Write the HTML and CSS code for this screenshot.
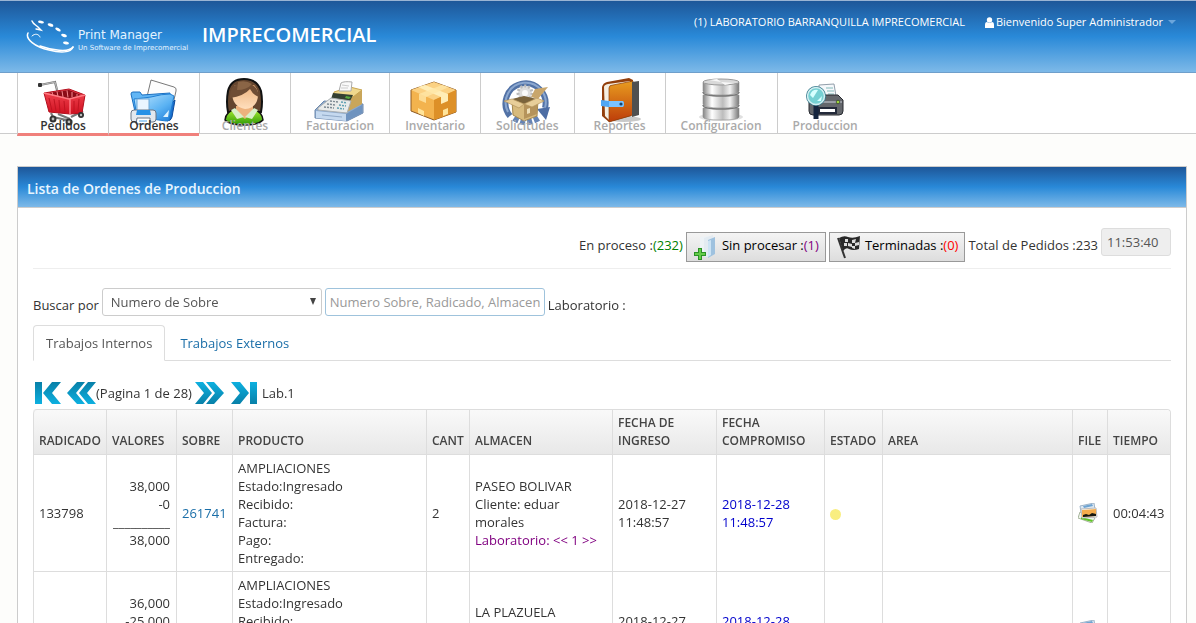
FILE: index.html
```html
<!DOCTYPE html>
<html lang="es">
<head>
<meta charset="utf-8">
<title>Print Manager</title>
<link rel="stylesheet" href="styles.css">
</head>
<body>
<header class="topbar">
  <a class="logo" href="#">
    <svg class="logo-mark" viewBox="0 0 50 36" aria-hidden="true">
      <g fill="none" stroke="#fff" stroke-linecap="round">
        <path d="M6 3c1 3 4 4 6 6l3 3-5-1" stroke-width="1.4"/>
        <path d="M6 18c3-3 7-2 8 1" stroke-width="1"/>
        <path d="M2 15c-3 6 7 14 21 17 11 3 22 3 24-3" stroke-width="1.5"/>
        <path d="M14 28c11 4 29 7 33 1" stroke-width="1.5"/>
      </g>
      <g fill="#fff">
        <ellipse cx="15" cy="4" rx="3" ry="1.4" transform="rotate(12 15 4)"/>
        <ellipse cx="24.500" cy="7" rx="3" ry="1.500" transform="rotate(18 24.500 7)"/>
        <ellipse cx="32" cy="11.500" rx="3" ry="1.500" transform="rotate(28 32 11.500)"/>
        <ellipse cx="38" cy="17.500" rx="3" ry="1.500" transform="rotate(20 38 17.500)"/>
        <ellipse cx="40" cy="25" rx="3" ry="1.400" transform="rotate(8 40 25)"/>
      </g>
    </svg>
    <span class="logo-text">
      <span class="logo-name">Print Manager</span>
      <span class="logo-tag">Un Software de Imprecomercial</span>
    </span>
  </a>
  <h1 class="company">IMPRECOMERCIAL</h1>
  <div class="account">
    <span>(1) LABORATORIO BARRANQUILLA IMPRECOMERCIAL</span>
    <button class="user-menu" type="button">
      <svg class="user-icon" viewBox="0 0 9 11" aria-hidden="true"><circle cx="4.500" cy="3" r="2.700" fill="#fff"/><path d="M0 11V8q0-3 2-3 2.500 2 5 0 2 0 2 3v3z" fill="#fff"/></svg>
      <span>Bienvenido Super Administrador</span>
      <span class="caret"></span>
    </button>
  </div>
</header>

<nav class="mainnav">
  <a class="nav-item active" href="#">
    <svg class="nav-icon" viewBox="0 0 48 48" aria-hidden="true">
      <defs><linearGradient id="red" x1="0" y1="0" x2="0" y2="1"><stop offset="0" stop-color="#f54a55"/><stop offset="1" stop-color="#cf1020"/></linearGradient></defs>
      <path d="M1 8l15-3 3 12M12 36l2 4 18 4M42 34l-1 3M19 37l12 5M44 34L32 40" fill="none" stroke="#777" stroke-width="2.200"/>
      <path d="M1 8l15-3 3 11" fill="none" stroke="#ccc" stroke-width=".8"/>
      <rect x="-1" y="6" width="4" height="4" rx="1" fill="#333"/>
      <path d="M5 16L30 12l16 6-3 18-12 1-21-2z" fill="url(#red)" stroke="#b20e1c"/>
      <path d="M9 16l21-3 12 5-12 4z" fill="#8b0c17"/>
      <path d="M13 15l1 4M18 14.500l1 5M23 14l1 6M28 13.500l1 7M33 15v5M38 17v2" stroke="#f58a90" stroke-width="1"/>
      <path d="M5 16l25 6 16-4M31 22v15" fill="none" stroke="#ff7a82" stroke-width="1.500"/>
      <path d="M10 21l3 13M15 22l2 12M20 23l1 12M25 24l1 11M35 24v11M40 22l-1 12" stroke="#c01421" stroke-width="1"/>
      <g fill="#333"><circle cx="14" cy="42" r="3.500"/><circle cx="30" cy="45" r="3.500"/><circle cx="42" cy="38" r="3"/></g>
      <g fill="#bbb"><circle cx="14" cy="42" r="1.400"/><circle cx="30" cy="45" r="1.400"/><circle cx="42" cy="38" r="1.200"/></g>
    </svg>
    <span class="nav-label">Pedidos</span>
  </a>
  <a class="nav-item active" href="#">
    <svg class="nav-icon" viewBox="0 0 48 48" aria-hidden="true">
      <defs><linearGradient id="blue" x1="0" y1="0" x2="1" y2="1"><stop offset="0" stop-color="#c4e9ff"/><stop offset=".6" stop-color="#5ab2f3"/><stop offset="1" stop-color="#1b78d6"/></linearGradient></defs>
      <path d="M21 3l23 7q3 1 2 4l-5 22-26-8z" fill="#fdfdfd" stroke="#555" stroke-width=".8"/>
      <path d="M38 30l7-7-3 17q-1 4-5 4z" fill="#1a6fce" stroke="#0c4c9d"/>
      <path d="M1 17q0-2 2-2l7 0 2 3 28-2-1 26-33-3z" fill="#62b6f5" stroke="#1b6fc0"/>
      <path d="M4 22q10-1 17-2 11-3 19-3l4 2-5 24q-1 1-3 1L7 40z" fill="url(#blue)" stroke="#1f7ed3"/>
      <path d="M33 40l6-7-1 7z" fill="#dff3ff"/>
      <rect x="7" y="22" width="12" height="15" fill="#eaf5ff" stroke="#6ea8d8"/>
      <rect x="1" y="33" width="25" height="12" rx="3" fill="#e3e8ee" stroke="#6b7686"/>
      <path d="M7 33h13l1 5H6z" fill="#2791e6"/>
      <path d="M7 41h13v6H6z" fill="#fff" stroke="#6b7686"/>
      <path d="M9 44h8" stroke="#48a2e8"/>
    </svg>
    <span class="nav-label">Ordenes</span>
  </a>
  <a class="nav-item" href="#">
    <svg class="nav-icon" viewBox="0 0 48 48" aria-hidden="true">
      <defs><linearGradient id="green" x1="0" y1="0" x2="0" y2="1"><stop offset="0" stop-color="#a8ed34"/><stop offset="1" stop-color="#2f9a07"/></linearGradient><linearGradient id="skin" x1="0" y1="0" x2="0" y2="1"><stop offset="0" stop-color="#edb27d"/><stop offset="1" stop-color="#ffdfbd"/></linearGradient></defs>
      <path d="M7 35Q5 25 7 14 10 2 23 2t17 12q2 11 0 21z" fill="#65462f" stroke="#111" stroke-width="2"/>
      <path d="M4 43q1-9 11-11h16q10 2 11 11-5 5-19 5T4 43z" fill="url(#green)" stroke="#111" stroke-width="1.500"/>
      <path d="M15 29h17v5l-8 8-9-7z" fill="#edb27d"/>
      <path d="M14 31l9 9-7 2-6-9zM33 31l-9 9 7 2 6-9z" fill="#d9efc8"/>
      <path d="M11 17q0-5 3-9h19q4 4 4 9 0 14-13 15-12-2-13-15z" fill="url(#skin)"/>
      <path d="M9 21Q8 7 22 6q15 0 16 14-6-2-9-8-6 7-20 9z" fill="#6f4d34"/>
      <path d="M17 5q8-2 14 2-5 6-15 6z" fill="#8a6546"/>
    </svg>
    <span class="nav-label">Clientes</span>
  </a>
  <a class="nav-item" href="#">
    <svg class="nav-icon" viewBox="0 0 48 48" aria-hidden="true">
      <path d="M-1 33l9-9 39 3v9l-16 8L-1 41z" fill="#8caace" stroke="#6c88ad"/>
      <path d="M0 34l30 3v7L0 41z" fill="#c5d9ef"/>
      <path d="M6 38l20 2" stroke="#91aac8"/>
      <path d="M30 37l16-9v8l-16 8z" fill="#6f93bf"/>
      <path d="M34 20l12-7 0 14-15 8z" fill="#c9a65a"/>
      <path d="M18 15l16-5 12 3-9 7-19-3z" fill="#efd88e" stroke="#c8a550"/>
      <path d="M17 16l20 2-3 6-19-2z" fill="#343f32"/>
      <path d="M30 19l5 1-2 2-4-1z" fill="#55a83f"/>
      <path d="M2 31l13-10 20 3-4 12-29-3z" fill="#e9ebea" stroke="#abb0b3"/>
      <path d="M14 24l8 1M11 27l9 1M8 30l10 1" stroke="#7d8993" stroke-width="1.500" stroke-dasharray="2 1"/>
      <path d="M25 25l6 1M23 28l7 1M21 31l7 1" stroke="#61a1b3" stroke-width="1.500" stroke-dasharray="2 1"/>
      <path d="M23 14l2-8q3-2 11-1l-1 9z" fill="#fafafa" stroke="#aaa"/>
      <path d="M26 8l7 1M25 11l7 0" stroke="#ccc"/>
    </svg>
    <span class="nav-label">Facturacion</span>
  </a>
  <a class="nav-item" href="#">
    <svg class="nav-icon" viewBox="0 0 48 48" aria-hidden="true">
      <path d="M0 13L23 5l22 8v22L23 43 0 34z" fill="#f3b34e" stroke="#8e5b24"/>
      <path d="M0 13l23-8 22 8-22 10z" fill="#fbd183"/>
      <path d="M23 23l22-10v22l-22 8z" fill="#dd9028"/>
      <path d="M7 10l23 10v7l7-3v-7L14 8z" fill="#ffedb6"/>
      <path d="M38 10L15 20v6l-7-3v-6L31 8z" fill="#ffe6a6" opacity=".8"/>
      <path d="M7 31l6 3v5l-6-3zM32 33l5-2v6l-5 2z" fill="#ffe49a"/>
    </svg>
    <span class="nav-label">Inventario</span>
  </a>
  <a class="nav-item" href="#">
    <svg class="nav-icon" viewBox="0 0 48 48" aria-hidden="true">
      <path d="M7 39A20 20 0 1 1 42 31" fill="none" stroke="#5272a6" stroke-width="6"/>
      <path d="M5 35A20 20 0 1 1 42 31" fill="none" stroke="#8ba7cf" stroke-width="2"/>
      <path d="M34 32l13-2-4 13z" fill="#4d6da4"/>
      <path d="M11 41q12 8 25 0" fill="none" stroke="#6684b5" stroke-width="6" stroke-dasharray="5 2"/>
      <circle cx="22" cy="16" r="7" fill="#ddd" stroke="#bbb" stroke-width="3" stroke-dasharray="2 2"/>
      <circle cx="22" cy="16" r="3" fill="#fafafa"/>
      <path d="M9 24l12-3 14 2-1 16-13 5-11-6z" fill="#d7ba7d" stroke="#a58850"/>
      <path d="M21 26l13-4v15l-13 5z" fill="#b5935b"/>
      <path d="M9 22l12-3 13 3-13 5z" fill="#7b643c"/>
      <path d="M9 22L21 27l-5 4L1 24z" fill="#e8ce99" stroke="#b3945b" stroke-width=".7"/>
      <path d="M21 27l13-6 7 3-12 6z" fill="#e8ce99" stroke="#b3945b" stroke-width=".7"/>
      <path d="M28 20l4-8 13-2-10 12z" fill="#c8a66c"/>
      <path d="M24 32l3-1v5l-3 1z" fill="#eedfba"/>
    </svg>
    <span class="nav-label">Solicitudes</span>
  </a>
  <a class="nav-item" href="#">
    <svg class="nav-icon" viewBox="0 0 48 48" aria-hidden="true">
      <defs><linearGradient id="book" x1="0" y1="0" x2="0" y2="1"><stop offset="0" stop-color="#e89c20"/><stop offset="1" stop-color="#bd3c09"/></linearGradient></defs>
      <ellipse cx="28" cy="42" rx="17" ry="3" fill="#777" opacity=".4"/>
      <path d="M6 10q1-4 5-5l22-4 4 2-2 36-22 6-7-6z" fill="#923e0b"/>
      <path d="M8 10q0-2 4-3l22-3v34l-20 6-5-5z" fill="#f5eee0"/>
      <path d="M13 11q0-3 4-3l20-4v34l-24 7z" fill="url(#book)" stroke="#8c400c" stroke-width=".7"/>
      <path d="M36 5l7-1v34l-7 2z" fill="#505050"/>
      <path d="M5 23l8 1h14q2 3 0 6H12l-7-1z" fill="#51a7f4"/>
      <path d="M13 24h14q2 3 0 6H13z" fill="#7bc3ff"/>
      <circle cx="25" cy="27" r="1.600" fill="#18436d"/>
    </svg>
    <span class="nav-label">Reportes</span>
  </a>
  <a class="nav-item" href="#">
    <svg class="nav-icon" viewBox="0 0 48 48" aria-hidden="true">
      <defs><linearGradient id="steel"><stop offset="0" stop-color="#858585"/><stop offset=".25" stop-color="#fff"/><stop offset=".55" stop-color="#bcbcbc"/><stop offset=".75" stop-color="#f2f2f2"/><stop offset="1" stop-color="#777"/></linearGradient></defs>
      <ellipse cx="24" cy="40" rx="22" ry="4" fill="#999" opacity=".3"/>
      <g fill="url(#steel)" stroke="#929292" stroke-width=".6">
        <path d="M6 31v9q0 3 18 3t18-3v-9z"/>
        <path d="M6 18v9q0 4 18 4t18-4v-9z"/>
        <path d="M6 5v9q0 4 18 4t18-4V5z"/>
      </g>
      <path d="M6 15q0 4 18 4t18-4M6 28q0 4 18 4t18-4" fill="none" stroke="#777" stroke-width="1.500"/>
      <ellipse cx="24" cy="5" rx="18" ry="3" fill="#d9d9d9" stroke="#999"/>
      <path d="M24 5l-12-2 8-1zM24 5l13 1-9 2z" fill="#f8f8f8"/>
    </svg>
    <span class="nav-label">Configuracion</span>
  </a>
  <a class="nav-item" href="#">
    <svg class="nav-icon" viewBox="0 0 48 48" aria-hidden="true">
      <path d="M18 8l15-1 3 18H18z" fill="#f5f8fb" stroke="#929eaa"/>
      <path d="M25 11h7M26 14h7M27 17h6" stroke="#83baba"/>
      <path d="M8 22l5-4h24l5 5v11q0 4-4 4H12q-4 0-4-4z" fill="#64676c" stroke="#282b31"/>
      <path d="M10 25h31" stroke="#999da4" stroke-width="2"/>
      <path d="M18 31h17v5H18z" fill="#fff" stroke="#242a3a" stroke-width="2"/>
      <circle cx="37" cy="25" r="1.800" fill="#9bd73c" stroke="#222" stroke-width=".6"/>
      <path d="M15 28v14" stroke="#15243e" stroke-width="5"/>
      <circle cx="15" cy="19" r="10" fill="#377b8d"/>
      <circle cx="15" cy="19" r="8.500" fill="#76d0d3" stroke="#d4eff2" stroke-width="1.500"/>
      <path d="M9 18q2-6 8-5l-5 8zM16 24l5-5-1 5z" fill="#d8ffff"/>
    </svg>
    <span class="nav-label">Produccion</span>
  </a>
</nav>

<main class="panel">
  <h2 class="panel-title">Lista de Ordenes de Produccion</h2>
  <div class="panel-body">
    <section class="summary">
      <span>En proceso :<span class="green">(232)</span></span>
      <button class="stat-button" type="button">
        <svg class="stat-icon" viewBox="0 0 24 24" aria-hidden="true">
          <path d="M6 2l9-1v19H6z" fill="#edf2f6"/><path d="M10 3l9-3v18l-6 4h-3z" fill="#e3ebf2"/><path d="M14 5l7-3v17l-7 4z" fill="#9fc2df"/><path d="M14 6l3-1v15l-3 2z" fill="#cce3f4"/>
          <path d="M4 13h4v4h4v4H8v4H4v-4H0v-4h4z" fill="#2b9226"/><path d="M5 14h2v4h4v2H7v4H5v-4H1v-2h4z" fill="#63cb48"/>
        </svg>
        <span class="stat-text">Sin procesar :<span class="purple">(1)</span></span>
      </button>
      <button class="stat-button" type="button">
        <svg class="stat-icon" viewBox="0 0 24 24" aria-hidden="true">
          <path d="M1 3l7 20" stroke="#333" stroke-width="2"/><path d="M2 3q5-3 9-1 5 2 12-1l-1 13q-6 2-10 0-3-2-6 2z" fill="#292929"/>
          <path d="M8 4l3 0v3l-3 0zM15 5l4-1-1 4h-3zM11 8l4 1v3l-4-1zM18 8l4-1v3l-4 1zM7 8h3v3H7zM15 11h3v3l-3-1z" fill="#ddd"/>
        </svg>
        <span class="stat-text">Terminadas :<span class="red">(0)</span></span>
      </button>
      <span>Total de Pedidos :233</span>
      <input class="clock" type="text" value="11:53:40" aria-label="Hora" readonly>
    </section>

    <form class="filters">
      <label for="criterio">Buscar por</label>
      <span class="select-wrap"><select class="field" id="criterio"><option>Numero de Sobre</option></select></span>
      <input class="field search" type="text" placeholder="Numero Sobre, Radicado, Almacen" aria-label="Texto a buscar" autofocus>
      <span>Laboratorio :</span>
    </form>

    <div class="tabs">
      <a class="tab current" href="#">Trabajos Internos</a>
      <a class="tab" href="#">Trabajos Externos</a>
    </div>

    <div class="pager">
      <svg width="0" height="0" class="defs" aria-hidden="true"><defs><linearGradient id="cyan" x1="0" y1="0" x2="0" y2="1"><stop offset="0" stop-color="#0880a8"/><stop offset="1" stop-color="#0db0e0"/></linearGradient><linearGradient id="cyan2" x1="0" y1="0" x2="0" y2="1"><stop offset="0" stop-color="#0db0e0"/><stop offset="1" stop-color="#0880a8"/></linearGradient></defs></svg>
      <button class="page-button" type="button" aria-label="Primera"><svg viewBox="0 0 26 24" aria-hidden="true"><path d="M0 1h7v22H0zM17 1h9l-9 11 9 11h-9L8 12z" fill="url(#cyan)"/></svg></button>
      <button class="page-button wide" type="button" aria-label="Anterior"><svg viewBox="0 0 29 24" aria-hidden="true"><path d="M10 1h8L9 12l9 11h-8L0 12zM21 1h8l-9 11 9 11h-8l-9-11z" fill="url(#cyan)"/></svg></button>
      <span class="page-text">(Pagina 1 de 28)</span>
      <button class="page-button wide" type="button" aria-label="Siguiente"><svg viewBox="0 0 29 24" aria-hidden="true"><path d="M0 1h8l9 11-9 11H0l9-11zM11 1h8l10 11-10 11h-8l9-11z" fill="url(#cyan2)"/></svg></button>
      <button class="page-button last" type="button" aria-label="Ultima"><svg viewBox="0 0 26 24" aria-hidden="true"><path d="M0 1h9l9 11-9 11H0l9-11zM19 1h7v22h-7z" fill="url(#cyan2)"/></svg></button>
      <span>Lab.1</span>
    </div>

    <table class="orders">
      <colgroup><col class="c-radicado"><col class="c-valores"><col class="c-sobre"><col class="c-producto"><col class="c-cant"><col class="c-almacen"><col class="c-ingreso"><col class="c-compromiso"><col class="c-estado"><col><col class="c-file"><col class="c-tiempo"></colgroup>
      <thead>
        <tr><th>RADICADO</th><th>VALORES</th><th>SOBRE</th><th>PRODUCTO</th><th>CANT</th><th>ALMACEN</th><th>FECHA DE INGRESO</th><th>FECHA COMPROMISO</th><th>ESTADO</th><th>AREA</th><th>FILE</th><th>TIEMPO</th></tr>
      </thead>
      <tbody>
        <tr>
          <td>133798</td>
          <td class="amounts">38,000<br>-0<br>__________<br>38,000</td>
          <td><a class="link" href="#">261741</a></td>
          <td>AMPLIACIONES<br>Estado:Ingresado<br>Recibido:<br>Factura:<br>Pago:<br>Entregado:</td>
          <td>2</td>
          <td>PASEO BOLIVAR<br>Cliente: eduar morales<br><span class="purple">Laboratorio: &lt;&lt; 1 &gt;&gt;</span></td>
          <td>2018-12-27 11:48:57</td>
          <td class="due">2018-12-28 11:48:57</td>
          <td><span class="dot"></span></td>
          <td></td>
          <td><svg class="file-icon" viewBox="0 0 20 20" aria-hidden="true"><path d="M2 3l14-3 2 13-14 3z" fill="#dfeaf4" stroke="#9eb4c9"/><path d="M5 3l9-2 1 2-9 2z" fill="#6fa4d2"/><path d="M2 9l15 6-3 5-14-5z" fill="#eef3e9" stroke="#a7b59d"/><path d="M3 14l12 3-1 2-11-3z" fill="#61c52a"/><path d="M3 6l15-1 1 9-15 1z" fill="#fff" stroke="#bbb"/><path d="M4 7l14-1v7l-14 1z" fill="#f5ad4c"/><path d="M5 14v-2l3-1 3 1 3-2 4 1v2z" fill="#17180f"/></svg></td>
          <td>00:04:43</td>
        </tr>
        <tr>
          <td></td>
          <td class="amounts">36,000<br>-25,000<br>__________<br>11,000</td>
          <td></td>
          <td>AMPLIACIONES<br>Estado:Ingresado<br>Recibido:<br>Factura:<br>Pago:<br>Entregado:</td>
          <td></td>
          <td>LA PLAZUELA<br>Cliente:<br><span class="purple">Laboratorio: &lt;&lt; 1 &gt;&gt;</span></td>
          <td>2018-12-27 11:48:57</td>
          <td class="due">2018-12-28 11:48:57</td>
          <td><span class="dot"></span></td>
          <td></td>
          <td><svg class="file-icon" viewBox="0 0 20 20" aria-hidden="true"><path d="M2 3l14-3 2 13-14 3z" fill="#dfeaf4" stroke="#9eb4c9"/><path d="M5 3l9-2 1 2-9 2z" fill="#6fa4d2"/><path d="M3 6l15-1 1 9-15 1z" fill="#f5ad4c" stroke="#bbb"/></svg></td>
          <td></td>
        </tr>
      </tbody>
    </table>
  </div>
</main>
</body>
</html>
```

FILE: styles.css
```css
* { box-sizing: border-box; }
html { overflow: hidden; }
body { margin: 0; background: #fdfdfb; color: #333; font: 13px/18px "Open Sans", sans-serif; }
a { text-decoration: none; color: inherit; }
button, input, select { font: inherit; color: inherit; }
svg { display: block; }
.green { color: #008000; }
.purple { color: #800080; }
.red { color: #f00; }
.link { color: #1a6ea8; }

.topbar { display: flex; align-items: flex-start; height: 73px; padding: 16px 20px 0 26px; color: #fff; border-top: 1px solid #9ab4d4; border-bottom: 1px solid #6f9fcb; background: linear-gradient(#1e5799, #2989d8 50%, #7db9e8); }
.logo { display: flex; width: 176px; gap: 2px; padding-top: 1px; color: #e4f3ff; }
.logo-mark { width: 50px; height: 36px; flex: none; }
.logo-text { display: flex; flex-direction: column; padding-top: 10px; white-space: nowrap; }
.logo-name { font: 12px/14px "DejaVu Sans", sans-serif; }
.logo-tag { font: 7px/12px "DejaVu Sans", sans-serif; }
.company { margin: 0; font-size: 20px; line-height: 36px; font-weight: 600; }
.account { display: flex; gap: 20px; margin-left: auto; font-size: 11px; line-height: 10px; }
.user-menu { display: flex; align-items: center; gap: 2px; height: 10px; padding: 0; border: 0; background: none; }
.user-icon { width: 9px; height: 11px; }
.caret { margin-left: 3px; border: 4px solid transparent; border-top-color: #6ba5db; border-bottom: 0; }

.mainnav { display: flex; height: 61px; padding-left: 17px; background: #fff; border-bottom: 1px solid #ccc; }
.nav-item { display: flex; flex-direction: column; align-items: center; min-width: 91px; height: 60px; padding: 4px 15px 0; border-left: 1px solid #ccc; color: #aaa; }
.nav-item.active { height: 63px; color: #333; border-bottom: 3px solid #f0807b; }
.nav-icon { width: 48px; height: 48px; flex: none; overflow: visible; }
.nav-label { position: relative; margin-top: -6px; font-size: 12px; line-height: 14px; font-weight: 600; }

.panel { margin: 32px 9px 0 17px; border: 1px solid #ccc; background: #fff; }
.panel-title { margin: 0; padding: 3px 9px 0; font-size: 14px; line-height: 37px; font-weight: 600; color: #e8f5ff; border-bottom: 1px solid #ccc; background: linear-gradient(#1e5799, #2989d8 50%, #7db9e8); }
.panel-body { padding: 20px 15px 0; }
.summary { display: flex; justify-content: flex-end; gap: 3px; height: 41px; padding-bottom: 6px; border-bottom: 1px solid #eee; line-height: 34px; }
.stat-button { display: flex; align-items: center; gap: 4px; height: 30px; margin-top: 4px; padding: 0 6px 0 7px; border: 1px solid #999; color: #000; background: linear-gradient(#f4f4f4, #ddd); line-height: 18px; }
.stat-icon { width: 24px; height: 24px; overflow: visible; }
.stat-text { padding-bottom: 4px; }
.clock { width: 70px; height: 28px; padding: 0 5px; border: 1px solid #ddd; border-radius: 3px; background: #eee; color: #555; }

.filters { display: flex; gap: 3px; margin-top: 19px; line-height: 34px; }
.field { width: 220px; height: 28px; border: 1px solid #ccc; border-radius: 3px; background: #fff; color: #555; outline: 0; }
.select-wrap { position: relative; height: 28px; line-height: 18px; }
.select-wrap::after { content: ""; position: absolute; right: 6px; top: 10px; border: 3px solid transparent; border-top: 7px solid #444; border-bottom: 0; pointer-events: none; }
select.field { appearance: none; padding: 0 8px; }
.search { padding: 0 4px; border-color: #9fc3dc; }
.search::placeholder { color: #999; }

.tabs { display: flex; margin-top: 3px; border-bottom: 1px solid #ddd; }
.tab { height: 35px; padding: 8px 12px 0; margin-bottom: -1px; margin-right: 2px; border: 1px solid transparent; color: #1a6ea8; }
.tab.current { height: 36px; color: #555; background: #fff; border-color: #ddd #ddd #fff; border-radius: 4px 4px 0 0; }

.pager { display: flex; align-items: center; height: 24px; margin-top: 20px; padding-left: 2px; }
.defs { position: absolute; }
.page-button { width: 26px; height: 24px; padding: 0; margin-right: 6px; border: 0; background: none; }
.page-button.wide { width: 29px; margin-right: 0; }
.page-text { margin-right: 3px; }
.page-button.last { margin: 0 5px 0 7px; }

.orders { width: 100%; margin-top: 4px; table-layout: fixed; border-collapse: separate; border-spacing: 0; border: 1px solid #ddd; border-left: 0; border-radius: 4px; }
.orders th, .orders td { padding: 4px 5px; border-left: 1px solid #ddd; text-align: left; }
.orders th { height: 44px; font-size: 12px; font-weight: 600; color: #444; vertical-align: bottom; background: linear-gradient(#f9f9f9, #e8e8e8); }
.orders th:first-child { border-top-left-radius: 4px; }
.orders th:last-child { border-top-right-radius: 4px; }
.orders td { border-top: 1px solid #ddd; vertical-align: middle; }
.orders td.amounts { padding-right: 6px; text-align: right; }
.orders td.due { color: #00c; }
.c-radicado { width: 73px; }
.c-valores { width: 70px; }
.c-sobre { width: 56px; }
.c-producto { width: 194px; }
.c-cant { width: 43px; }
.c-almacen { width: 143px; }
.c-ingreso { width: 104px; }
.c-compromiso { width: 108px; }
.c-estado { width: 58px; }
.c-file { width: 35px; }
.c-tiempo { width: 63px; }
.dot { display: block; width: 11px; height: 11px; margin-top: 3px; border-radius: 50%; background: #f9ee80; }
.file-icon { width: 20px; height: 20px; }
```
